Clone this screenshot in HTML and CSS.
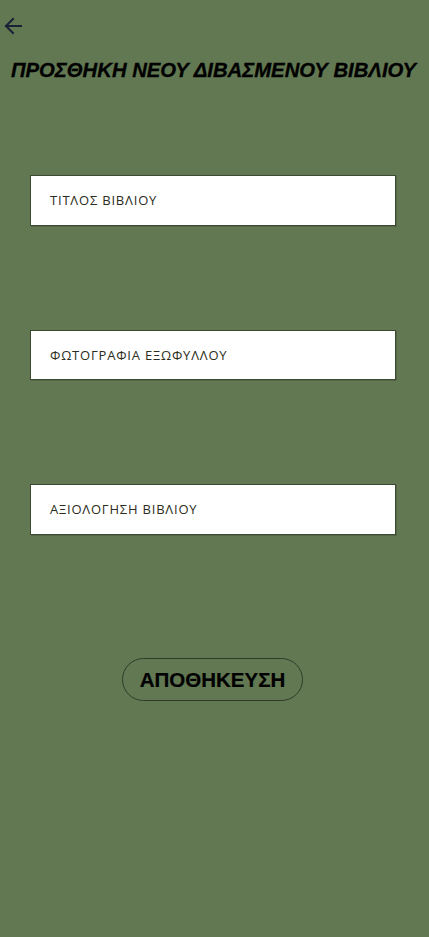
FILE: index.html
```html
<!DOCTYPE html>
<html lang="el">
<head>
<meta charset="utf-8">
<title>Προσθήκη νέου διαβασμένου βιβλίου</title>
<link rel="stylesheet" href="styles.css">
</head>
<body>
<div class="page">
  <header class="top">
    <button class="back" aria-label="Πίσω">
      <svg width="20" height="20" viewBox="0 0 20 20" fill="none" stroke="#1b2236" stroke-width="2" stroke-linecap="square">
        <path d="M18 10H3"/>
        <path d="M10 3L3 10L10 17"/>
      </svg>
    </button>
  </header>
  <h1 class="title">ΠΡΟΣΘΗΚΗ ΝΕΟΥ ΔΙΒΑΣΜΕΝΟΥ ΒΙΒΛΙΟΥ</h1>
  <form class="form">
    <div class="field">ΤΙΤΛΟΣ ΒΙΒΛΙΟΥ</div>
    <div class="field">ΦΩΤΟΓΡΑΦΙΑ ΕΞΩΦΥΛΛΟΥ</div>
    <div class="field">ΑΞΙΟΛΟΓΗΣΗ ΒΙΒΛΙΟΥ</div>
    <button type="button" class="save">ΑΠΟΘΗΚΕΥΣΗ</button>
  </form>
</div>
</body>
</html>
```
FILE: styles.css
```css
html, body {
  margin: 0;
  padding: 0;
  background: #627852;
}
.page {
  width: 429px;
  min-height: 937px;
  background: #627852;
  display: flex;
  flex-direction: column;
}
.top {
  height: 52px;
  display: flex;
  align-items: flex-start;
}
.back {
  margin: 16px 0 0 3px;
  padding: 0;
  border: 0;
  background: none;
  width: 20px;
  height: 20px;
  display: flex;
}
.title {
  margin: 7px 0 0 0;
  padding-right: 2px;
  text-align: center;
  font-family: "Liberation Sans", Arial, sans-serif;
  font-weight: bold;
  font-style: italic;
  font-size: 20.3px;
  line-height: 23px;
  color: #000;
  -webkit-text-stroke: 0.3px #000;
}
.form {
  margin: 93px 0 0 0;
  padding-left: 30px;
  display: flex;
  flex-direction: column;
  align-items: flex-start;
}
.field {
  box-sizing: border-box;
  width: 366px;
  height: 50.5px;
  margin: 0 0 104px 0;
  background: #fff;
  border: 1px solid #3c4a33;
  box-shadow: 1px 1px 0 rgba(0,0,0,0.15);
  padding: 0 0 0 19px;
  display: flex;
  align-items: center;
  font-family: "Open Sans", "Noto Sans", sans-serif;
  font-weight: 400;
  font-size: 13px;
  letter-spacing: 0.8px;
  color: #2b2d20;
}
.save {
  margin: 19.5px 0 0 92px;
  width: 181px;
  height: 43px;
  border: 1px solid #2f3b27;
  border-radius: 22px;
  background: transparent;
  font-family: "Liberation Sans", Arial, sans-serif;
  font-weight: bold;
  font-size: 20.5px;
  color: #000;
  padding: 0;
  -webkit-text-stroke: 0.2px #000;
}
```
